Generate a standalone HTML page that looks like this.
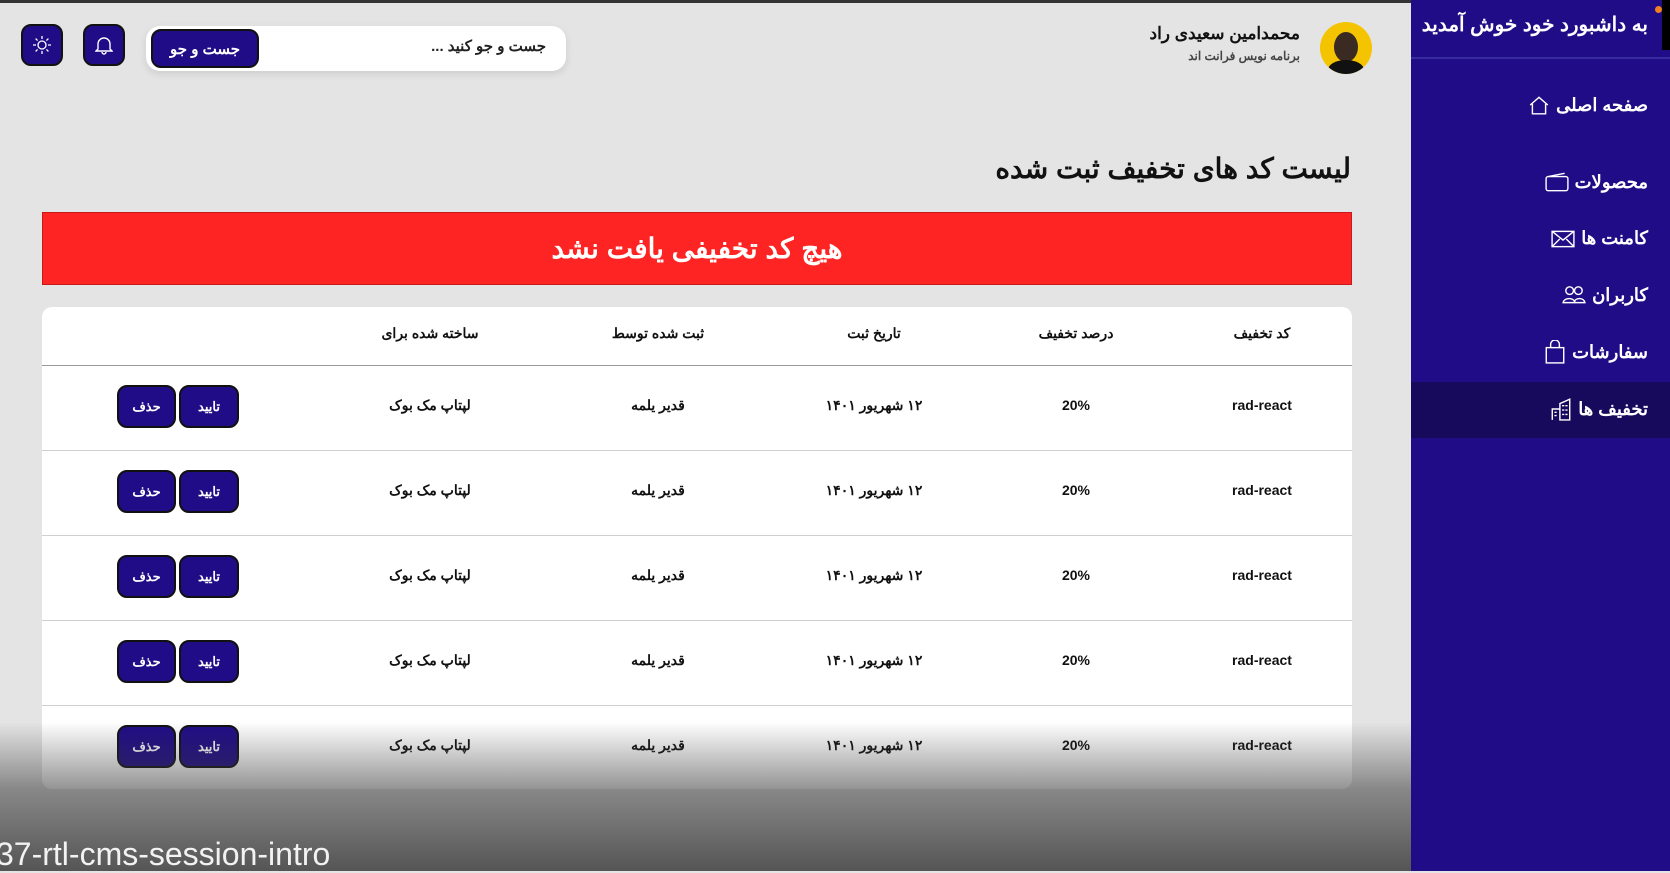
<!DOCTYPE html>
<html><head><meta charset="utf-8"><style>
*{margin:0;padding:0;box-sizing:border-box}
body{width:1670px;height:871px;overflow:hidden;background:#e4e4e4;font-family:"Liberation Sans","Noto Sans CJK SC",sans-serif;position:relative;font-weight:bold}
.abs{position:absolute}
.sb{left:1411px;top:0;width:259px;height:871px;background:#1f0c86}
.sb .t{right:22px;top:12px;color:#fff;font-size:20px;white-space:nowrap;direction:rtl}
.sb .hr{left:0;right:0;top:57px;height:2px;background:#3a2aa0}
.mi{right:22px;color:#fff;font-size:18px;direction:rtl;display:flex;align-items:center;gap:6px;white-space:nowrap}
.act{left:0;right:0;top:382px;height:56px;background:#170a5c}
.btn{background:#1f0c86;border:2px solid #111;border-radius:10px;color:#fff;display:flex;align-items:center;justify-content:center}
.row{left:42px;width:1310px;height:1px;background:#cfcfcf}
.c{font-size:14px;color:#111;transform:translateX(50%);white-space:nowrap;direction:rtl}
</style></head><body>
<div class="abs" style="left:0;top:0;width:1411px;height:3px;background:#333"></div>
<div class="abs sb">
 <div class="abs t">به داشبورد خود خوش آمدید</div>
 <div class="abs" style="right:0;top:0;width:8px;height:50px;background:#000"></div>
 <div class="abs" style="right:8px;top:6px;width:7px;height:7px;border-radius:50%;background:#f08020"></div>
 <div class="abs hr"></div>
 <div class="abs act"></div>
 <div class="abs mi" style="top:94px">صفحه اصلی <svg width="22" height="22" viewBox="0 0 20 20" fill="none" stroke="#fff" stroke-width="1.3"><path d="M2 10L10 3l8 7M4 9v9h12V9"/></svg></div>
 <div class="abs mi" style="top:171px">محصولات <svg width="24" height="22" viewBox="0 0 22 20" fill="none" stroke="#fff" stroke-width="1.3"><rect x="1" y="5" width="20" height="13" rx="2"/><path d="M3 5l15-3"/></svg></div>
 <div class="abs mi" style="top:228px">کامنت ها <svg width="24" height="20" viewBox="0 0 22 18" fill="none" stroke="#fff" stroke-width="1.3"><rect x="1" y="2" width="20" height="14"/><path d="M1 2l10 8 10-8M1 16l7-7M21 16l-7-7"/></svg></div>
 <div class="abs mi" style="top:284px">کاربران <svg width="24" height="22" viewBox="0 0 22 20" fill="none" stroke="#fff" stroke-width="1.3"><circle cx="7" cy="6" r="3.5"/><circle cx="15" cy="6" r="3.5"/><path d="M1 17c1-5 10-5 11 0zM11 17c1-5 9-5 10 0z"/></svg></div>
 <div class="abs mi" style="top:340px">سفارشات <svg width="22" height="24" viewBox="0 0 20 22" fill="none" stroke="#fff" stroke-width="1.3"><rect x="2" y="7" width="16" height="14"/><path d="M6 7V4a4 4 0 018 0v3"/></svg></div>
 <div class="abs mi" style="top:397px">تخفیف ها <svg width="22" height="24" viewBox="0 0 20 22" fill="none" stroke="#fff" stroke-width="1.3"><path d="M9 21V6l9-4v19zM2 21V11h7M11 8h2M14 8h2M11 12h2M14 12h2M11 16h2M14 16h2M4 14h2M4 17h2"/></svg></div>
</div>
<div class="abs" style="left:1320px;top:22px;width:52px;height:52px;border-radius:50%;background:#f5c400;overflow:hidden"><div class="abs" style="left:14px;top:10px;width:24px;height:30px;border-radius:50%;background:#3b2a22"></div><div class="abs" style="left:8px;top:38px;width:36px;height:20px;border-radius:50% 50% 0 0;background:#111"></div></div>
<div class="abs" style="right:370px;top:24px;font-size:17px;direction:rtl;color:#111">محمدامین سعیدی راد</div>
<div class="abs" style="right:370px;top:49px;font-size:12px;direction:rtl;color:#444">برنامه نویس فرانت اند</div>
<div class="abs" style="left:146px;top:26px;width:420px;height:45px;background:#fff;border-radius:14px;box-shadow:0 3px 8px rgba(0,0,0,.1)"></div>
<div class="abs" style="right:1124px;top:37px;font-size:15px;direction:rtl;color:#222">جست و جو کنید ...</div>
<div class="abs btn" style="left:151px;top:29px;width:108px;height:39px;font-size:15px">جست و جو</div>
<div class="abs btn" style="left:83px;top:24px;width:42px;height:42px"><svg width="18" height="20" viewBox="0 0 18 20" fill="none" stroke="#fff" stroke-width="1.4"><path d="M3 14V9a6 6 0 0112 0v5l2 2H1zM7 17a2 2 0 004 0"/></svg></div>
<div class="abs btn" style="left:21px;top:24px;width:42px;height:42px"><svg width="20" height="20" viewBox="0 0 20 20" fill="none" stroke="#fff" stroke-width="1.3"><circle cx="10" cy="10" r="4"/><path d="M10 1v3M10 16v3M1 10h3M16 10h3M3.6 3.6l2 2M14.4 14.4l2 2M3.6 16.4l2-2M14.4 5.6l2-2"/></svg></div>
<div class="abs" style="right:319px;top:152px;font-size:28px;direction:rtl;color:#111">لیست کد های تخفیف ثبت شده</div>
<div class="abs" style="left:42px;top:212px;width:1310px;height:73px;background:#ff2424;border:1px solid #c61a1a;color:#fff;font-size:28px;display:flex;align-items:center;justify-content:center;direction:rtl">هیچ کد تخفیفی یافت نشد</div>
<div class="abs" style="left:42px;top:307px;width:1310px;height:482px;background:#fff;border-radius:10px"></div>
<div class="abs row" style="top:365px;background:#999"></div>
<div class="abs row" style="top:450px"></div><div class="abs row" style="top:535px"></div><div class="abs row" style="top:620px"></div><div class="abs row" style="top:705px"></div>
<div class="abs c" style="right:408px;top:325px">کد تخفیف</div>
<div class="abs c" style="right:594px;top:325px">درصد تخفیف</div>
<div class="abs c" style="right:796px;top:325px">تاریخ ثبت</div>
<div class="abs c" style="right:1012px;top:325px">ثبت شده توسط</div>
<div class="abs c" style="right:1240px;top:325px">ساخته شده برای</div>
<div id="rows"></div>
<script>
var h='';[407,492,577,662,747].forEach(function(y){
h+='<div class="abs c" style="right:408px;top:'+(y-10)+'px;direction:ltr">rad-react</div>'+
'<div class="abs c" style="right:594px;top:'+(y-10)+'px;direction:ltr">20%</div>'+
'<div class="abs c" style="right:796px;top:'+(y-10)+'px">۱۲ شهریور ۱۴۰۱</div>'+
'<div class="abs c" style="right:1012px;top:'+(y-10)+'px">قدیر یلمه</div>'+
'<div class="abs c" style="right:1240px;top:'+(y-10)+'px">لپتاپ مک بوک</div>'+
'<div class="abs btn" style="left:117px;top:'+(y-22)+'px;width:59px;height:43px;font-size:13px">حذف</div>'+
'<div class="abs btn" style="left:179px;top:'+(y-22)+'px;width:60px;height:43px;font-size:13px">تایید</div>';});
document.getElementById('rows').innerHTML=h;
</script>
<div class="abs" style="left:0;top:722px;width:1411px;height:149px;background:linear-gradient(rgba(60,60,60,0),rgba(60,60,60,.55) 45%,rgba(60,60,60,.85))"></div>
<div class="abs" style="left:-4px;top:836px;font-size:32px;color:#f2f2f2;font-weight:normal;white-space:nowrap">37-rtl-cms-session-intro</div>
</body></html>
